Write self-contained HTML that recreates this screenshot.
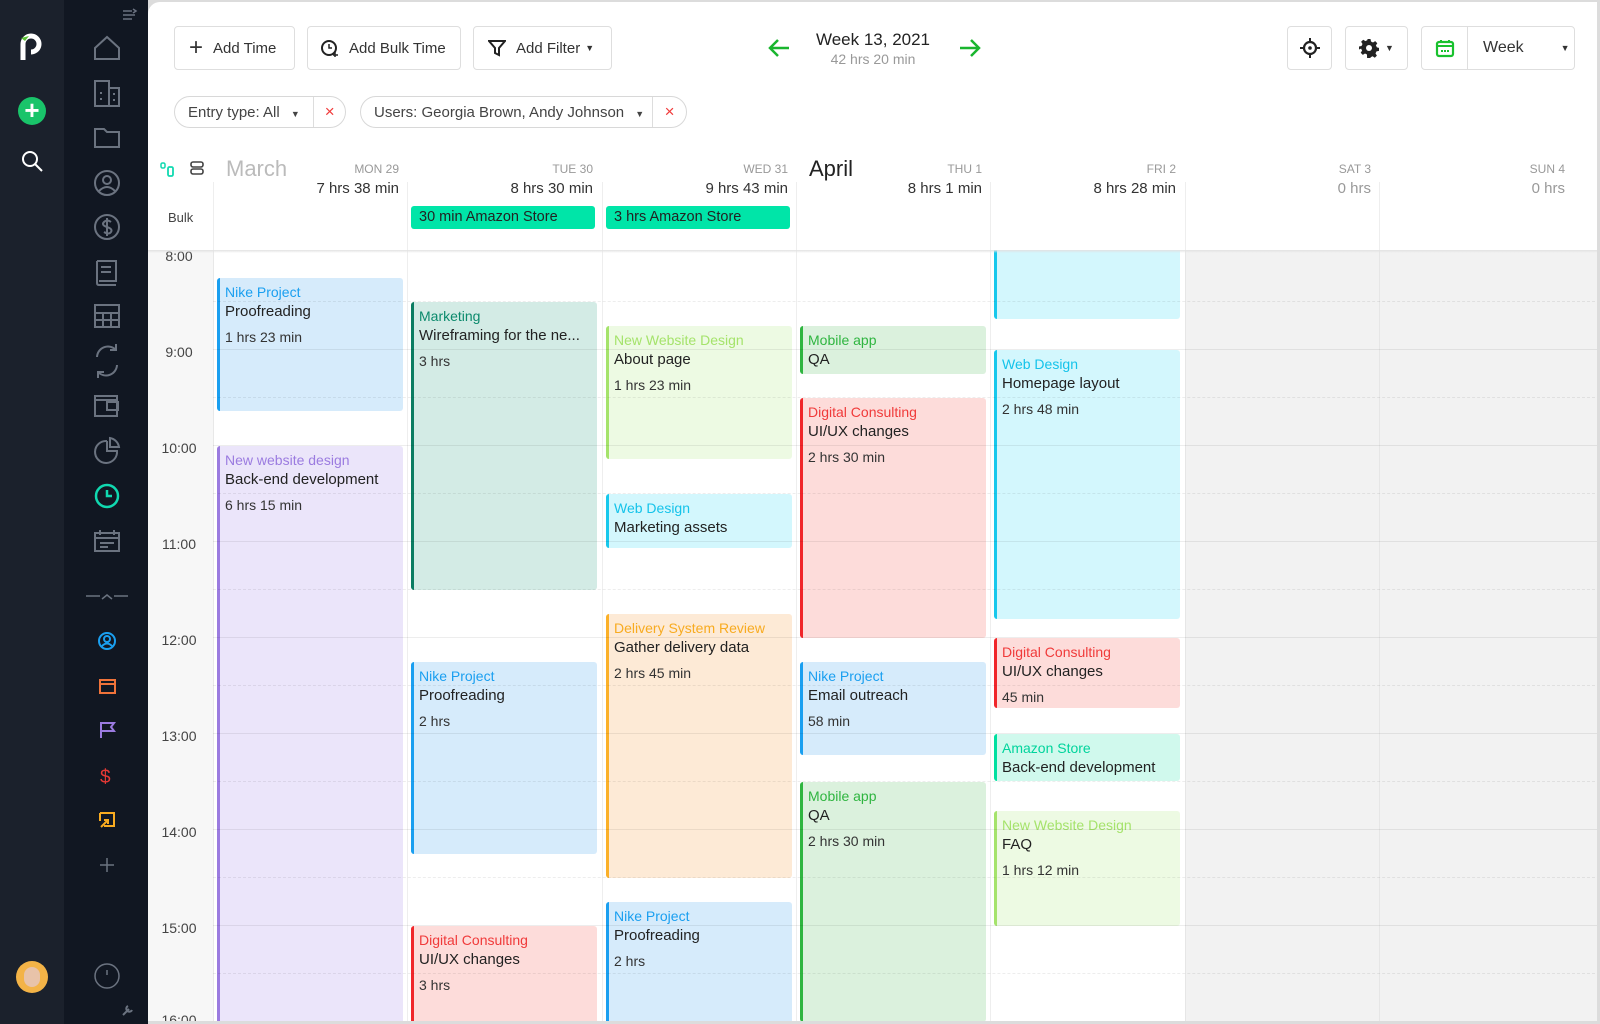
<!DOCTYPE html>
<html style="overflow:hidden;width:1600px;height:1024px"><head><meta charset="utf-8"><style>
*{box-sizing:border-box;margin:0;padding:0}
body{width:1600px;height:1024px;overflow:hidden;background:#dcdcdc;font-family:"Liberation Sans",Arial,sans-serif;position:relative;color:#222}
.a{position:absolute}
#sb1{left:0;top:0;width:64px;height:1024px;background:#1b212c}
#sb2{left:64px;top:0;width:84px;height:1024px;background:#111722}
#main{left:148px;top:2px;width:1449px;height:1019px;background:#fff;border-top-left-radius:12px;overflow:hidden}
.btn{position:absolute;top:26px;height:44px;border:1px solid #dedede;border-radius:4px;background:#fff;font-size:15px;color:#333;display:flex;align-items:center}
.pill{position:absolute;top:96px;height:32px;border:1px solid #d8d8d8;border-radius:16px;font-size:15px;color:#444;display:flex;align-items:center}
.dl{position:absolute;font-size:12px;color:#999;text-align:right;width:180px}
.hr{position:absolute;font-size:15px;color:#333;text-align:right;width:180px}
.chip{position:absolute;top:206px;height:23px;background:#00e5a8;border-radius:3px;font-size:14.5px;color:#222;padding:3px 8px;width:184px}
.ev{position:absolute;width:186px;border-radius:3px;border-left:3px solid;padding:5px 0 0 5px;overflow:hidden;white-space:nowrap}
.ev .p{font-size:14px;line-height:19px}
.ev .t{font-size:15px;line-height:20px;color:#222}
.ev .d{font-size:14px;color:#333;margin-top:7px}
.tl{position:absolute;left:148px;width:62px;text-align:center;font-size:14px;color:#444}
.blue{background:rgba(200,228,250,.75);border-color:#1a9ff0}.blue .p{color:#1a9ff0}
.cyan{background:rgba(200,245,252,.8);border-color:#17c8ec}.cyan .p{color:#14c3ea}
.pur{background:rgba(228,220,248,.75);border-color:#9b7be0}.pur .p{color:#9b7be0}
.mkt{background:rgba(200,230,222,.8);border-color:#0b7d62}.mkt .p{color:#0b8a6c}
.nwd{background:rgba(232,249,220,.8);border-color:#a5e36b}.nwd .p{color:#a5e36b}
.mob{background:rgba(210,238,213,.8);border-color:#2fb540}.mob .p{color:#2fb540}
.dc{background:rgba(253,214,211,.85);border-color:#f0262a}.dc .p{color:#f03a3a}
.del{background:rgba(253,229,204,.8);border-color:#fbb028}.del .p{color:#f8ab20}
.amz{background:rgba(200,248,234,.85);border-color:#00e0a0}.amz .p{color:#00d49c}
.hl{position:absolute;left:213px;width:1387px;height:1px;background:rgba(0,0,0,.07)}
.hh{position:absolute;left:213px;width:1387px;border-top:1px dashed rgba(0,0,0,.07)}
</style></head><body>
<div id="sb1" class="a">
 <svg class="a" style="left:18px;top:32px" width="26" height="30" viewBox="0 0 26 30"><path d="M5 28V12a8 8 0 1 1 8 8" fill="none" stroke="#fff" stroke-width="5"/><path d="M3 6l4 3 4-5" fill="#5bc236"/></svg>
 <div class="a" style="left:18px;top:97px;width:28px;height:28px;border-radius:50%;background:#19c46a;color:#fff;font-size:26px;line-height:27px;text-align:center;font-weight:bold">+</div>
 <svg class="a" style="left:21px;top:150px" width="22" height="22"><circle cx="9" cy="9" r="7" fill="none" stroke="#fff" stroke-width="2"/><path d="M14 14l7 7" stroke="#fff" stroke-width="2"/></svg>
 <div class="a" style="left:16px;top:961px;width:32px;height:32px;border-radius:50%;background:#f3b347"><div style="margin:6px 8px;width:16px;height:20px;border-radius:8px;background:#e8c3a9"></div></div>
</div>
<div id="sb2" class="a">
 <svg class="a" style="left:58px;top:8px" width="16" height="14"><path d="M1 3h9M1 7h12M1 11h9M11 1l3 2-3 2" stroke="#6b7280" stroke-width="1.5" fill="none"/></svg>
 <svg width="84" height="1024" class="a" style="left:0;top:0" fill="none" stroke="#6b7380" stroke-width="2">
  <path d="M31 48l12-11 12 11v11H31z"/>
  <path d="M31 81h14v25H31zM45 88h10v18H45M36 93h2M36 99h2M49 94h2M49 100h2"/>
  <path d="M31 129h9l3 3h12v15H31z"/>
  <circle cx="43" cy="183" r="12"/><circle cx="43" cy="180" r="4"/><path d="M35 191q8-8 16 0"/>
  <circle cx="43" cy="227" r="12"/><path d="M47 222q-4-3-7 0t3 5 4 5-7 0M43 218v18"/>
  <path d="M33 261h19v20H35M33 261v22q0 2 2 2h17M37 267h10M37 272h10"/>
  <path d="M31 305h24v22H31zM31 313h24M39 313v14M47 313v14M31 320h24"/>
  <path d="M33 357a11 11 0 0 1 19-7M53 365a11 11 0 0 1-19 7M52 344v6h-6M34 378v-6h6"/>
  <path d="M31 396h22v20H31zM31 400h22M43 402h11v8H43z"/>
  <path d="M43 441v10h10a11 11 0 1 1-10-10M46 438a11 11 0 0 1 9 9h-9z"/>
  <circle cx="43" cy="496" r="11" stroke="#10d9b0" stroke-width="2.5"/><path d="M43 490v6h5" stroke="#10d9b0" stroke-width="2.5"/>
  <path d="M31 533h24v18H31zM31 538h24M36 530v5M50 530v5M36 543h14M36 547h8" />
  <path d="M22 596h14M50 596h14M38 599l5-4 5 4" stroke-width="1.5"/>
  <circle cx="43" cy="641" r="8" stroke="#1a9ff0"/><circle cx="43" cy="639" r="3" stroke="#1a9ff0"/><path d="M38 646q5-5 10 0" stroke="#1a9ff0"/>
  <path d="M36 680h15v13H36zM36 684h15" stroke="#f0733a"/>
  <path d="M37 722v16M37 723h13l-3 4 3 4H37" stroke="#9b7be0"/>
  <text x="36" y="783" fill="#e53935" stroke="none" font-size="19" font-family="Liberation Sans">$</text>
  <path d="M36 813h14v13H40M36 813v8M37 827l7-7M40 820h4v4" stroke="#f8ab20"/>
  <path d="M43 858v14M36 865h14" stroke-width="1.5"/>
  <circle cx="43" cy="976" r="12" stroke-width="1.5"/><path d="M43 970v5" stroke-width="1.5"/>
  <path d="M59 1015l6-6M64 1006a3 3 0 1 0 4 4" stroke-width="2"/>
 </svg>
</div>
<div id="main" class="a">
 <div style="position:absolute;left:-148px;top:-2px;width:1600px;height:1024px">
  <div class="btn" style="left:174px;width:121px;padding-left:14px"><span style="font-size:24px;margin-right:10px;font-weight:300">+</span>Add Time</div>
  <div class="btn" style="left:307px;width:154px;padding-left:12px"><svg width="20" height="20" style="margin-right:9px"><circle cx="9" cy="10" r="7" fill="none" stroke="#222" stroke-width="2"/><path d="M9 6v4h3" stroke="#222" stroke-width="1.5" fill="none"/><path d="M15 14v5M13 17h5" stroke="#222" stroke-width="1.5"/></svg>Add Bulk Time</div>
  <div class="btn" style="left:473px;width:139px;padding-left:14px"><svg width="18" height="18" style="margin-right:10px"><path d="M1 2h16l-6 7v7l-4-2V9z" fill="none" stroke="#222" stroke-width="2"/></svg>Add Filter <span style="font-size:9px;margin-left:5px">▼</span></div>
  <svg class="a" style="left:768px;top:38px" width="22" height="20"><path d="M21 10H2M10 2L2 10l8 8" fill="none" stroke="#19b52e" stroke-width="2.5"/></svg>
  <svg class="a" style="left:959px;top:38px" width="22" height="20"><path d="M1 10h19M12 2l8 8-8 8" fill="none" stroke="#19b52e" stroke-width="2.5"/></svg>
  <div class="a" style="left:793px;top:30px;width:160px;text-align:center;font-size:17px;color:#222">Week 13, 2021</div>
  <div class="a" style="left:793px;top:51px;width:160px;text-align:center;font-size:14px;color:#999">42 hrs 20 min</div>
  <div class="btn" style="left:1287px;width:45px;justify-content:center"><svg width="22" height="22"><circle cx="11" cy="11" r="6" fill="none" stroke="#222" stroke-width="2.2"/><circle cx="11" cy="11" r="1.8" fill="#222"/><path d="M11 1v4M11 17v4M1 11h4M17 11h4" stroke="#222" stroke-width="2"/></svg></div>
  <div class="btn" style="left:1345px;width:63px;justify-content:center"><svg width="20" height="20" viewBox="0 0 20 20"><path d="M8.5 1h3l.5 2.5 2 1 2.2-1.4 2.1 2.1-1.4 2.2 1 2 2.1.5v3l-2.5.5-1 2 1.4 2.2-2.1 2.1-2.2-1.4-2 1-.5 2.5h-3L8 16.5l-2-1-2.2 1.4-2.1-2.1 1.4-2.2-1-2L0 11.5v-3l2.5-.5 1-2L2.1 3.8 4.2 1.7 6.4 3.1l2-1z" fill="#222"/><circle cx="10" cy="10" r="3" fill="#fff"/></svg><span style="font-size:9px;margin-left:6px">▼</span></div>
  <div class="btn" style="left:1421px;width:154px"><div style="width:46px;height:100%;border-right:1px solid #dedede;display:flex;align-items:center;justify-content:center"><svg width="20" height="20"><rect x="2" y="4" width="16" height="14" rx="2" fill="none" stroke="#19c12e" stroke-width="2.2"/><path d="M2 8h16M6 2v3M14 2v3M6 13h2M9 13h2M12 13h2" stroke="#19c12e" stroke-width="2"/></svg></div><span style="margin-left:15px;font-size:16px">Week</span><span style="font-size:9px;margin-left:37px">▼</span></div>
  <div class="pill" style="left:174px;width:172px"><span style="padding-left:13px;width:140px">Entry type: All <span style="font-size:9px;margin-left:7px">▼</span></span><span style="border-left:1px solid #ddd;height:100%;width:32px;text-align:center;line-height:30px;color:#f03a3a;font-size:17px">×</span></div>
  <div class="pill" style="left:360px;width:327px"><span style="padding-left:13px;width:293px">Users: Georgia Brown, Andy Johnson <span style="font-size:9px;margin-left:7px">▼</span></span><span style="border-left:1px solid #ddd;height:100%;width:34px;text-align:center;line-height:30px;color:#f03a3a;font-size:17px">×</span></div>
  <svg class="a" style="left:160px;top:161px" width="16" height="16"><rect x="1" y="2" width="4" height="5" rx="1.5" fill="none" stroke="#10d9b0" stroke-width="1.5"/><rect x="8" y="6" width="5" height="9" rx="1.5" fill="none" stroke="#10d9b0" stroke-width="1.8"/></svg>
  <svg class="a" style="left:190px;top:161px" width="14" height="14"><rect x="1" y="1" width="12" height="5" rx="2" fill="none" stroke="#444" stroke-width="1.6"/><rect x="1" y="8" width="12" height="5" rx="2" fill="none" stroke="#444" stroke-width="1.6"/></svg>
  <div class="a" style="left:168px;top:210px;font-size:13px;color:#444">Bulk</div>
  <div class="a" style="left:226px;top:156px;font-size:22px;color:#bbb">March</div>
  <div class="a" style="left:809px;top:156px;font-size:22px;color:#222">April</div>
  <div class="dl" style="left:219px;top:162px">MON 29</div><div class="hr" style="left:219px;top:180px">7 hrs 38 min</div>
  <div class="dl" style="left:413px;top:162px">TUE 30</div><div class="hr" style="left:413px;top:180px">8 hrs 30 min</div>
  <div class="dl" style="left:608px;top:162px">WED 31</div><div class="hr" style="left:608px;top:180px">9 hrs 43 min</div>
  <div class="dl" style="left:802px;top:162px">THU 1</div><div class="hr" style="left:802px;top:180px">8 hrs 1 min</div>
  <div class="dl" style="left:996px;top:162px">FRI 2</div><div class="hr" style="left:996px;top:180px">8 hrs 28 min</div>
  <div class="dl" style="left:1191px;top:162px">SAT 3</div><div class="hr" style="left:1191px;top:180px;color:#999">0 hrs</div>
  <div class="dl" style="left:1385px;top:162px">SUN 4</div><div class="hr" style="left:1385px;top:180px;color:#999">0 hrs</div>
  <div class="chip" style="left:411px">30 min Amazon Store</div>
  <div class="chip" style="left:606px">3 hrs Amazon Store</div>
  <div class="a" style="left:213px;top:182px;width:1px;height:70px;background:#eee"></div>
  <div class="a" style="left:407px;top:182px;width:1px;height:70px;background:#eee"></div>
  <div class="a" style="left:602px;top:182px;width:1px;height:70px;background:#eee"></div>
  <div class="a" style="left:796px;top:182px;width:1px;height:70px;background:#eee"></div>
  <div class="a" style="left:990px;top:182px;width:1px;height:70px;background:#eee"></div>
  <div class="a" style="left:1185px;top:182px;width:1px;height:70px;background:#eee"></div>
  <div class="a" style="left:1379px;top:182px;width:1px;height:70px;background:#eee"></div>
  <div class="a" style="left:148px;top:250px;width:1452px;height:774px;overflow:hidden">
   <div style="position:absolute;left:-148px;top:-250px;width:1600px;height:1024px">
    <div class="a" style="left:148px;top:250px;width:65px;height:774px;background:#f7f7f7"></div>
    <div class="a" style="left:1185px;top:250px;width:415px;height:774px;background:#f2f2f2"></div>
    <div class="a" style="left:213px;top:250px;width:1px;height:774px;background:#e8e8e8"></div>
    <div class="a" style="left:407px;top:250px;width:1px;height:774px;background:#eee"></div>
    <div class="a" style="left:602px;top:250px;width:1px;height:774px;background:#eee"></div>
    <div class="a" style="left:796px;top:250px;width:1px;height:774px;background:#eee"></div>
    <div class="a" style="left:990px;top:250px;width:1px;height:774px;background:#eee"></div>
    <div class="a" style="left:1185px;top:250px;width:1px;height:774px;background:#e6e6e6"></div>
    <div class="a" style="left:1379px;top:250px;width:1px;height:774px;background:#e6e6e6"></div>
    <div class="ev blue" style="left:217px;top:278px;height:133px"><div class="p">Nike Project</div><div class="t">Proofreading</div><div class="d">1 hrs 23 min</div></div>
    <div class="ev pur" style="left:217px;top:446px;height:578px"><div class="p">New website design</div><div class="t">Back-end development</div><div class="d">6 hrs 15 min</div></div>
    <div class="ev mkt" style="left:411px;top:302px;height:288px"><div class="p">Marketing</div><div class="t">Wireframing for the ne...</div><div class="d">3 hrs</div></div>
    <div class="ev blue" style="left:411px;top:662px;height:192px"><div class="p">Nike Project</div><div class="t">Proofreading</div><div class="d">2 hrs</div></div>
    <div class="ev dc" style="left:411px;top:926px;height:98px"><div class="p">Digital Consulting</div><div class="t">UI/UX changes</div><div class="d">3 hrs</div></div>
    <div class="ev nwd" style="left:606px;top:326px;height:133px"><div class="p">New Website Design</div><div class="t">About page</div><div class="d">1 hrs 23 min</div></div>
    <div class="ev cyan" style="left:606px;top:494px;height:54px"><div class="p">Web Design</div><div class="t">Marketing assets</div></div>
    <div class="ev del" style="left:606px;top:614px;height:264px"><div class="p">Delivery System Review</div><div class="t">Gather delivery data</div><div class="d">2 hrs 45 min</div></div>
    <div class="ev blue" style="left:606px;top:902px;height:122px"><div class="p">Nike Project</div><div class="t">Proofreading</div><div class="d">2 hrs</div></div>
    <div class="ev mob" style="left:800px;top:326px;height:48px"><div class="p">Mobile app</div><div class="t">QA</div></div>
    <div class="ev dc" style="left:800px;top:398px;height:240px"><div class="p">Digital Consulting</div><div class="t">UI/UX changes</div><div class="d">2 hrs 30 min</div></div>
    <div class="ev blue" style="left:800px;top:662px;height:93px"><div class="p">Nike Project</div><div class="t">Email outreach</div><div class="d">58 min</div></div>
    <div class="ev mob" style="left:800px;top:782px;height:240px"><div class="p">Mobile app</div><div class="t">QA</div><div class="d">2 hrs 30 min</div></div>
    <div class="ev cyan" style="left:994px;top:240px;height:79px"></div>
    <div class="ev cyan" style="left:994px;top:350px;height:269px"><div class="p">Web Design</div><div class="t">Homepage layout</div><div class="d">2 hrs 48 min</div></div>
    <div class="ev dc" style="left:994px;top:638px;height:70px"><div class="p">Digital Consulting</div><div class="t">UI/UX changes</div><div class="d">45 min</div></div>
    <div class="ev amz" style="left:994px;top:734px;height:47px"><div class="p">Amazon Store</div><div class="t">Back-end development</div></div>
    <div class="ev nwd" style="left:994px;top:811px;height:115px"><div class="p">New Website Design</div><div class="t">FAQ</div><div class="d">1 hrs 12 min</div></div>
    <div class="hl" style="top:349px"></div><div class="hl" style="top:445px"></div><div class="hl" style="top:541px"></div><div class="hl" style="top:637px"></div>
    <div class="hl" style="top:733px"></div><div class="hl" style="top:829px"></div><div class="hl" style="top:925px"></div><div class="hl" style="top:1021px"></div>
    <div class="hh" style="top:301px"></div><div class="hh" style="top:397px"></div><div class="hh" style="top:493px"></div><div class="hh" style="top:589px"></div>
    <div class="hh" style="top:685px"></div><div class="hh" style="top:781px"></div><div class="hh" style="top:877px"></div><div class="hh" style="top:973px"></div>
    <div class="tl" style="top:248px">8:00</div>
    <div class="tl" style="top:344px">9:00</div>
    <div class="tl" style="top:440px">10:00</div>
    <div class="tl" style="top:536px">11:00</div>
    <div class="tl" style="top:632px">12:00</div>
    <div class="tl" style="top:728px">13:00</div>
    <div class="tl" style="top:824px">14:00</div>
    <div class="tl" style="top:920px">15:00</div>
    <div class="tl" style="top:1012px">16:00</div>
   </div>
  </div>
  <div class="a" style="left:148px;top:250px;width:1452px;height:3px;background:linear-gradient(#e2e2e2,rgba(0,0,0,0))"></div>
 </div>
</div>
</body></html>
